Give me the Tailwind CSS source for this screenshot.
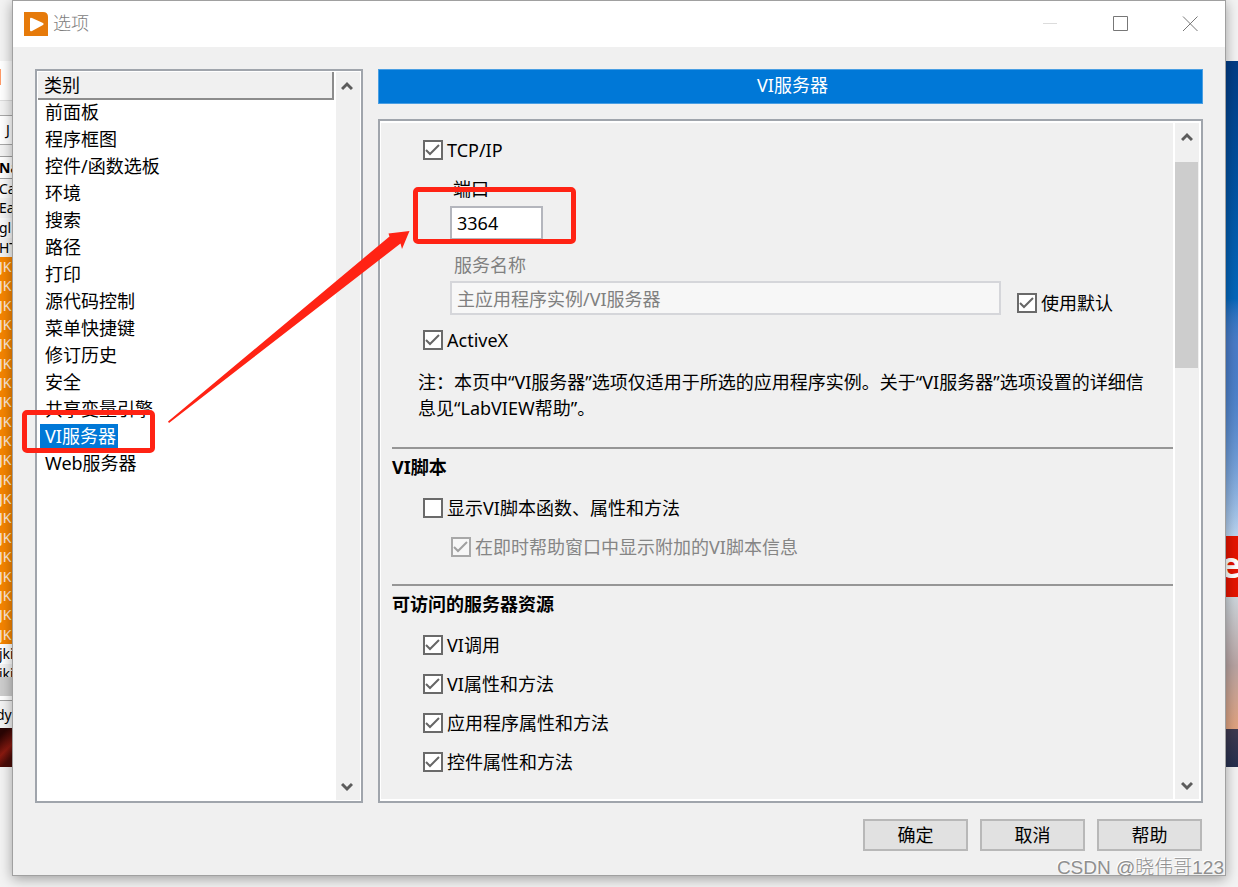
<!DOCTYPE html>
<html lang="zh-CN">
<head>
  <meta charset="UTF-8">
  <meta name="viewport" content="width=device-width, initial-scale=1.0">
  <title>选项</title>
  <script src="https://cdn.jsdelivr.net/npm/@tailwindcss/browser@4"></script>
</head>
<body class="relative flex min-h-screen overflow-x-hidden bg-[#f3f3f3] pb-[11px] font-['Noto_Sans','Noto_Sans_CJK_SC',sans-serif] text-[18px] leading-6 text-black">

  <!-- Window behind, left edge -->
  <div class="flex w-3 shrink-0 flex-col overflow-hidden whitespace-nowrap text-[14px] leading-[19px]" aria-hidden="true">
    <div class="h-[61px]"></div>
    <div class="flex h-10 items-start border-b border-[#dcdcdc] bg-white pt-2"><span class="h-4 w-px bg-[#ff9a66]"></span></div>
    <div class="h-[14px]"></div>
    <div class="h-[30px] border-y border-[#a8a8a8] bg-white pl-1.5 leading-7">J</div>
    <div class="h-[11px]"></div>
    <div class="h-[23px] border-y border-[#a0a0a0] bg-white font-bold leading-[22px]"><span class="-ml-px">Na</span></div>
    <div class="h-[19px] bg-[#fafafa]"><span class="-ml-px">Ca</span></div>
    <div class="h-5 bg-[#f3f3f3]"><span class="-ml-px">Ea</span></div>
    <div class="h-5 bg-[#fafafa]"><span class="-ml-px">gl</span></div>
    <div class="h-[19px] bg-[#f3f3f3]"><span class="-ml-px">HT</span></div>
    <div class="grid h-[387px] bg-[#f58400] text-white/85">
      <span class="-ml-px">JK</span><span class="-ml-px">JK</span><span class="-ml-px">JK</span><span class="-ml-px">JK</span><span class="-ml-px">JK</span>
      <span class="-ml-px">JK</span><span class="-ml-px">JK</span><span class="-ml-px">JK</span><span class="-ml-px">JK</span><span class="-ml-px">JK</span>
      <span class="-ml-px">JK</span><span class="-ml-px">JK</span><span class="-ml-px">JK</span><span class="-ml-px">JK</span><span class="-ml-px">JK</span>
      <span class="-ml-px">JK</span><span class="-ml-px">JK</span><span class="-ml-px">JK</span><span class="-ml-px">JK</span><span class="-ml-px">JK</span>
    </div>
    <div class="h-5 bg-white"><span class="-ml-px">jki</span></div>
    <div class="h-[13px] overflow-hidden bg-[#f3f3f3]"><span class="-ml-px">jki</span></div>
    <div class="h-[19px] bg-[#cdcdcd]"></div>
    <div class="h-1 bg-white"></div>
    <div class="h-7 border-t border-[#a0a0a0] pt-1"><span class="-ml-1">dy</span></div>
    <div class="h-[39px] bg-linear-135 from-[#2a0504] from-15% via-[#8a1a10] via-55% to-[#4a0c08] to-80%"></div>
  </div>

  <!-- Options dialog -->
  <main class="flex min-w-0 flex-1 flex-col border border-[#a0a0a0] bg-[#f0f0f0] shadow-[0_3px_12px_rgba(0,0,0,0.35)]">
    <header class="flex h-[46px] shrink-0 items-center bg-white pl-[11px]">
      <svg class="size-6" viewBox="0 0 24 24" aria-hidden="true">
        <path d="M0 0h19q5 0 5 5v19H0z" fill="#e67a0a"/>
        <path d="M6 7q0-2 2-1l11 5q1.5 1 0 2L8 19q-2 1-2-1z" fill="#fff"/>
      </svg>
      <h1 class="ml-[5px] flex-1 pb-0.5 font-light text-[#7d7d7d]">选项</h1>
      <button class="grid h-full w-[70px] place-items-center" aria-label="最小化">
        <svg class="size-4" viewBox="0 0 16 16" fill="none" stroke="#dcdcdc"><path d="M1 7.500h14"/></svg>
      </button>
      <button class="grid h-full w-[70px] place-items-center" aria-label="最大化">
        <svg class="size-4" viewBox="0 0 16 16" fill="none" stroke="#777"><path d="M1.500.5h14v14h-14z"/></svg>
      </button>
      <button class="grid h-full w-[70px] place-items-center" aria-label="关闭">
        <svg class="size-4" viewBox="0 0 16 16" fill="none" stroke="#777"><path d="M1 .5l14.500 14.500M15.500.5L1 15"/></svg>
      </button>
    </header>

    <div class="flex flex-1 flex-col px-[22px] pt-[22px] pb-6">
      <div class="flex flex-1 gap-[15px]">

        <!-- Categories -->
        <nav class="flex w-[328px] shrink-0 border-2 border-[#a0a5ac] bg-white p-px" aria-label="类别">
          <div class="flex-1">
            <h2 class="h-[28px] border-r-2 border-b-2 border-[#8c8c8c] bg-[#f0f0f0] pl-1.5 leading-[27px]">类别</h2>
            <ul class="pl-0.5 leading-[25px]">
              <li><button class="h-[27px] px-[5px] pb-0.5">前面板</button></li>
              <li><button class="h-[27px] px-[5px] pb-0.5">程序框图</button></li>
              <li><button class="h-[27px] px-[5px] pb-0.5">控件/函数选板</button></li>
              <li><button class="h-[27px] px-[5px] pb-0.5">环境</button></li>
              <li><button class="h-[27px] px-[5px] pb-0.5">搜索</button></li>
              <li><button class="h-[27px] px-[5px] pb-0.5">路径</button></li>
              <li><button class="h-[27px] px-[5px] pb-0.5">打印</button></li>
              <li><button class="h-[27px] px-[5px] pb-0.5">源代码控制</button></li>
              <li><button class="h-[27px] px-[5px] pb-0.5">菜单快捷键</button></li>
              <li><button class="h-[27px] px-[5px] pb-0.5">修订历史</button></li>
              <li><button class="h-[27px] px-[5px] pb-0.5">安全</button></li>
              <li><button class="h-[27px] px-[5px] pb-0.5">共享变量引擎</button></li>
              <li class="relative flex h-[27px] items-start">
                <button class="h-[25px] bg-[#0078d7] pr-0.5 pl-[5px] text-white" aria-current="true">VI服务器</button>
                <span class="absolute -top-[14px] -left-[18px] h-[43px] w-[133px] rounded-[5px] border-5 border-[#ff2314]"></span>
              </li>
              <li><button class="h-[27px] px-[5px] pb-0.5">Web服务器</button></li>
            </ul>
          </div>
          <div class="ml-0.5 flex w-6 flex-col items-center justify-between bg-[#f0f0f0] py-2 pr-0.5">
            <svg class="h-3 w-3" viewBox="0 0 12 12" fill="none" stroke="#5c5c5c" stroke-width="3"><path d="M1 9l5-5 5 5"/></svg>
            <svg class="h-3 w-3" viewBox="0 0 12 12" fill="none" stroke="#5c5c5c" stroke-width="3"><path d="M1 4l5 5 5-5"/></svg>
          </div>
        </nav>

        <!-- VI Server page -->
        <section class="flex min-w-0 flex-1 flex-col gap-[15px]">
          <h2 class="h-[35px] border border-[#4a9fe3] bg-[#0078d7] pl-1 text-center leading-[31px] text-white">VI服务器</h2>
          <div class="flex flex-1 border-2 border-[#a0a5ac] bg-white p-0.5 pl-px">
            <div class="min-w-0 flex-1 bg-[#f0f0f0] pt-[15px] pl-[11px]">
              <div class="flex flex-col pl-[31px]">
                <label class="flex h-6 items-center gap-[4px]">
                  <span class="relative grid size-5 place-items-center">
                    <input type="checkbox" checked class="peer size-5 appearance-none border-2 border-[#6a6a6a] bg-white">
                    <svg class="invisible absolute size-5 peer-checked:visible" viewBox="0 0 20 20" fill="none" stroke="#666" stroke-width="2"><path d="M3 10l4 4 9-9"/></svg>
                  </span>TCP/IP
                </label>
                <div class="mt-[15px] flex flex-col items-start pl-[27px]">
                  <label for="port" class="ml-[3px]">端口</label>
                  <div class="relative mt-[5px]">
                    <input id="port" type="text" value="3364" class="block h-[34px] w-[93px] border-2 border-[#b4b6bd] bg-white pl-[5px]">
                    <span class="absolute -top-[19px] -left-[37px] h-[57px] w-[163px] rounded-[5px] border-5 border-[#ff2314]"></span>
                  </div>
                  <label for="service" class="mt-[13px] ml-1 text-[#808080]">服务名称</label>
                  <div class="mt-1 flex w-full items-start gap-4">
                    <input id="service" type="text" value="主应用程序实例/VI服务器" disabled class="h-[34px] w-[551px] min-w-0 border-2 border-[#d5d6da] bg-[#f7f7f7] pl-[5px] text-[#808080]">
                    <label class="mt-2.5 flex h-6 shrink-0 items-center gap-[4px]">
                      <span class="relative grid size-5 place-items-center">
                        <input type="checkbox" checked class="peer size-5 appearance-none border-2 border-[#6a6a6a] bg-white">
                        <svg class="invisible absolute size-5 peer-checked:visible" viewBox="0 0 20 20" fill="none" stroke="#666" stroke-width="2"><path d="M3 10l4 4 9-9"/></svg>
                      </span>使用默认
                    </label>
                  </div>
                </div>
                <label class="mt-[13px] flex h-6 items-center gap-[4px]">
                  <span class="relative grid size-5 place-items-center">
                    <input type="checkbox" checked class="peer size-5 appearance-none border-2 border-[#6a6a6a] bg-white">
                    <svg class="invisible absolute size-5 peer-checked:visible" viewBox="0 0 20 20" fill="none" stroke="#666" stroke-width="2"><path d="M3 10l4 4 9-9"/></svg>
                  </span>ActiveX
                </label>
              </div>
              <p class="mt-[17px] pr-3 pl-[26px] leading-[26px]">注：本页中“VI服务器”选项仅适用于所选的应用程序实例。关于“VI服务器”选项设置的详细信息见“LabVIEW帮助”。</p>

              <h3 class="mt-[26px] border-t-2 border-[#969696] pt-[6px] font-bold">VI脚本</h3>
              <div class="mt-[17px] flex flex-col gap-[15px] pl-[31px]">
                <label class="flex h-6 items-center gap-[4px]">
                  <span class="relative grid size-5 place-items-center">
                    <input type="checkbox" class="peer size-5 appearance-none border-2 border-[#6a6a6a] bg-white">
                    <svg class="invisible absolute size-5 peer-checked:visible" viewBox="0 0 20 20" fill="none" stroke="#666" stroke-width="2"><path d="M3 10l4 4 9-9"/></svg>
                  </span>显示VI脚本函数、属性和方法
                </label>
                <label class="ml-7 flex h-6 items-center gap-[4px] text-[#858585]">
                  <span class="relative grid size-5 place-items-center">
                    <input type="checkbox" checked disabled class="peer size-5 appearance-none border-2 border-[#a8a8a8] bg-[#f7f7f7]">
                    <svg class="invisible absolute size-5 peer-checked:visible" viewBox="0 0 20 20" fill="none" stroke="#a0a0a0" stroke-width="2"><path d="M3 10l4 4 9-9"/></svg>
                  </span>在即时帮助窗口中显示附加的VI脚本信息
                </label>
              </div>

              <h3 class="mt-[25px] border-t-2 border-[#969696] pt-[6px] font-bold">可访问的服务器资源</h3>
              <div class="mt-[17px] flex flex-col gap-[15px] pl-[31px]">
                <label class="flex h-6 items-center gap-[4px]">
                  <span class="relative grid size-5 place-items-center">
                    <input type="checkbox" checked class="peer size-5 appearance-none border-2 border-[#6a6a6a] bg-white">
                    <svg class="invisible absolute size-5 peer-checked:visible" viewBox="0 0 20 20" fill="none" stroke="#666" stroke-width="2"><path d="M3 10l4 4 9-9"/></svg>
                  </span>VI调用
                </label>
                <label class="flex h-6 items-center gap-[4px]">
                  <span class="relative grid size-5 place-items-center">
                    <input type="checkbox" checked class="peer size-5 appearance-none border-2 border-[#6a6a6a] bg-white">
                    <svg class="invisible absolute size-5 peer-checked:visible" viewBox="0 0 20 20" fill="none" stroke="#666" stroke-width="2"><path d="M3 10l4 4 9-9"/></svg>
                  </span>VI属性和方法
                </label>
                <label class="flex h-6 items-center gap-[4px]">
                  <span class="relative grid size-5 place-items-center">
                    <input type="checkbox" checked class="peer size-5 appearance-none border-2 border-[#6a6a6a] bg-white">
                    <svg class="invisible absolute size-5 peer-checked:visible" viewBox="0 0 20 20" fill="none" stroke="#666" stroke-width="2"><path d="M3 10l4 4 9-9"/></svg>
                  </span>应用程序属性和方法
                </label>
                <label class="flex h-6 items-center gap-[4px]">
                  <span class="relative grid size-5 place-items-center">
                    <input type="checkbox" checked class="peer size-5 appearance-none border-2 border-[#6a6a6a] bg-white">
                    <svg class="invisible absolute size-5 peer-checked:visible" viewBox="0 0 20 20" fill="none" stroke="#666" stroke-width="2"><path d="M3 10l4 4 9-9"/></svg>
                  </span>控件属性和方法
                </label>
              </div>
            </div>
            <div class="ml-0.5 flex w-6 flex-col items-center bg-[#f0f0f0] py-2 pr-px">
              <svg class="h-3 w-3" viewBox="0 0 12 12" fill="none" stroke="#5c5c5c" stroke-width="3"><path d="M1 9l5-5 5 5"/></svg>
              <div class="mt-[19px] h-[206px] w-[23px] bg-[#cdcdcd]"></div>
              <svg class="mt-auto h-3 w-3" viewBox="0 0 12 12" fill="none" stroke="#5c5c5c" stroke-width="3"><path d="M1 4l5 5 5-5"/></svg>
            </div>
          </div>
        </section>
      </div>

      <footer class="mt-4 flex justify-end gap-3 pr-px">
        <button class="h-8 w-[105px] border-2 border-[#b8b8b8] bg-[#e1e1e1]">确定</button>
        <button class="h-8 w-[105px] border-2 border-[#b8b8b8] bg-[#e1e1e1]">取消</button>
        <button class="h-8 w-[105px] border-2 border-[#b8b8b8] bg-[#e1e1e1]">帮助</button>
      </footer>
    </div>
  </main>

  <!-- Desktop behind, right edge -->
  <div class="-z-10 flex w-3 shrink-0 flex-col overflow-hidden" aria-hidden="true">
    <div class="h-[61px]"></div>
    <div class="h-[475px] bg-linear-to-b from-[#023c85] via-[#0467bb] via-50% to-[#bcd5f0]">
      <div class="h-full bg-linear-to-b from-transparent from-50% via-[#4a7cc8] via-60% to-transparent"></div>
    </div>
    <div class="h-[61px] bg-[#e51400] text-[36px] leading-[58px] font-bold text-white"><span class="-ml-1.5">e</span></div>
    <div class="h-[132px] bg-linear-to-b from-[#cdd6dc] via-[#b7a3a2] via-52% to-[#e0a27e]"></div>
    <div class="h-[38px] bg-linear-to-b from-[#3f3a50] to-[#26304f]"></div>
  </div>

  <!-- Arrow from the category to the port field -->
  <svg class="pointer-events-none absolute top-[220px] left-[160px] h-[210px] w-[260px]" viewBox="0 0 260 210" fill="#ff2314" aria-hidden="true">
    <path d="M8 201.500L229.500 16.500L228.500 13.500L249.500 11L242 29L240.500 23.500L9 203z"/>
  </svg>

  <p class="absolute right-[14px] bottom-[7px] font-['Liberation_Sans','Noto_Sans_CJK_SC',sans-serif] text-[19px] font-light text-[#8f8f8f] [text-shadow:-1px_-1px_0_#fff]">CSDN @晓伟哥123</p>

</body>
</html>
